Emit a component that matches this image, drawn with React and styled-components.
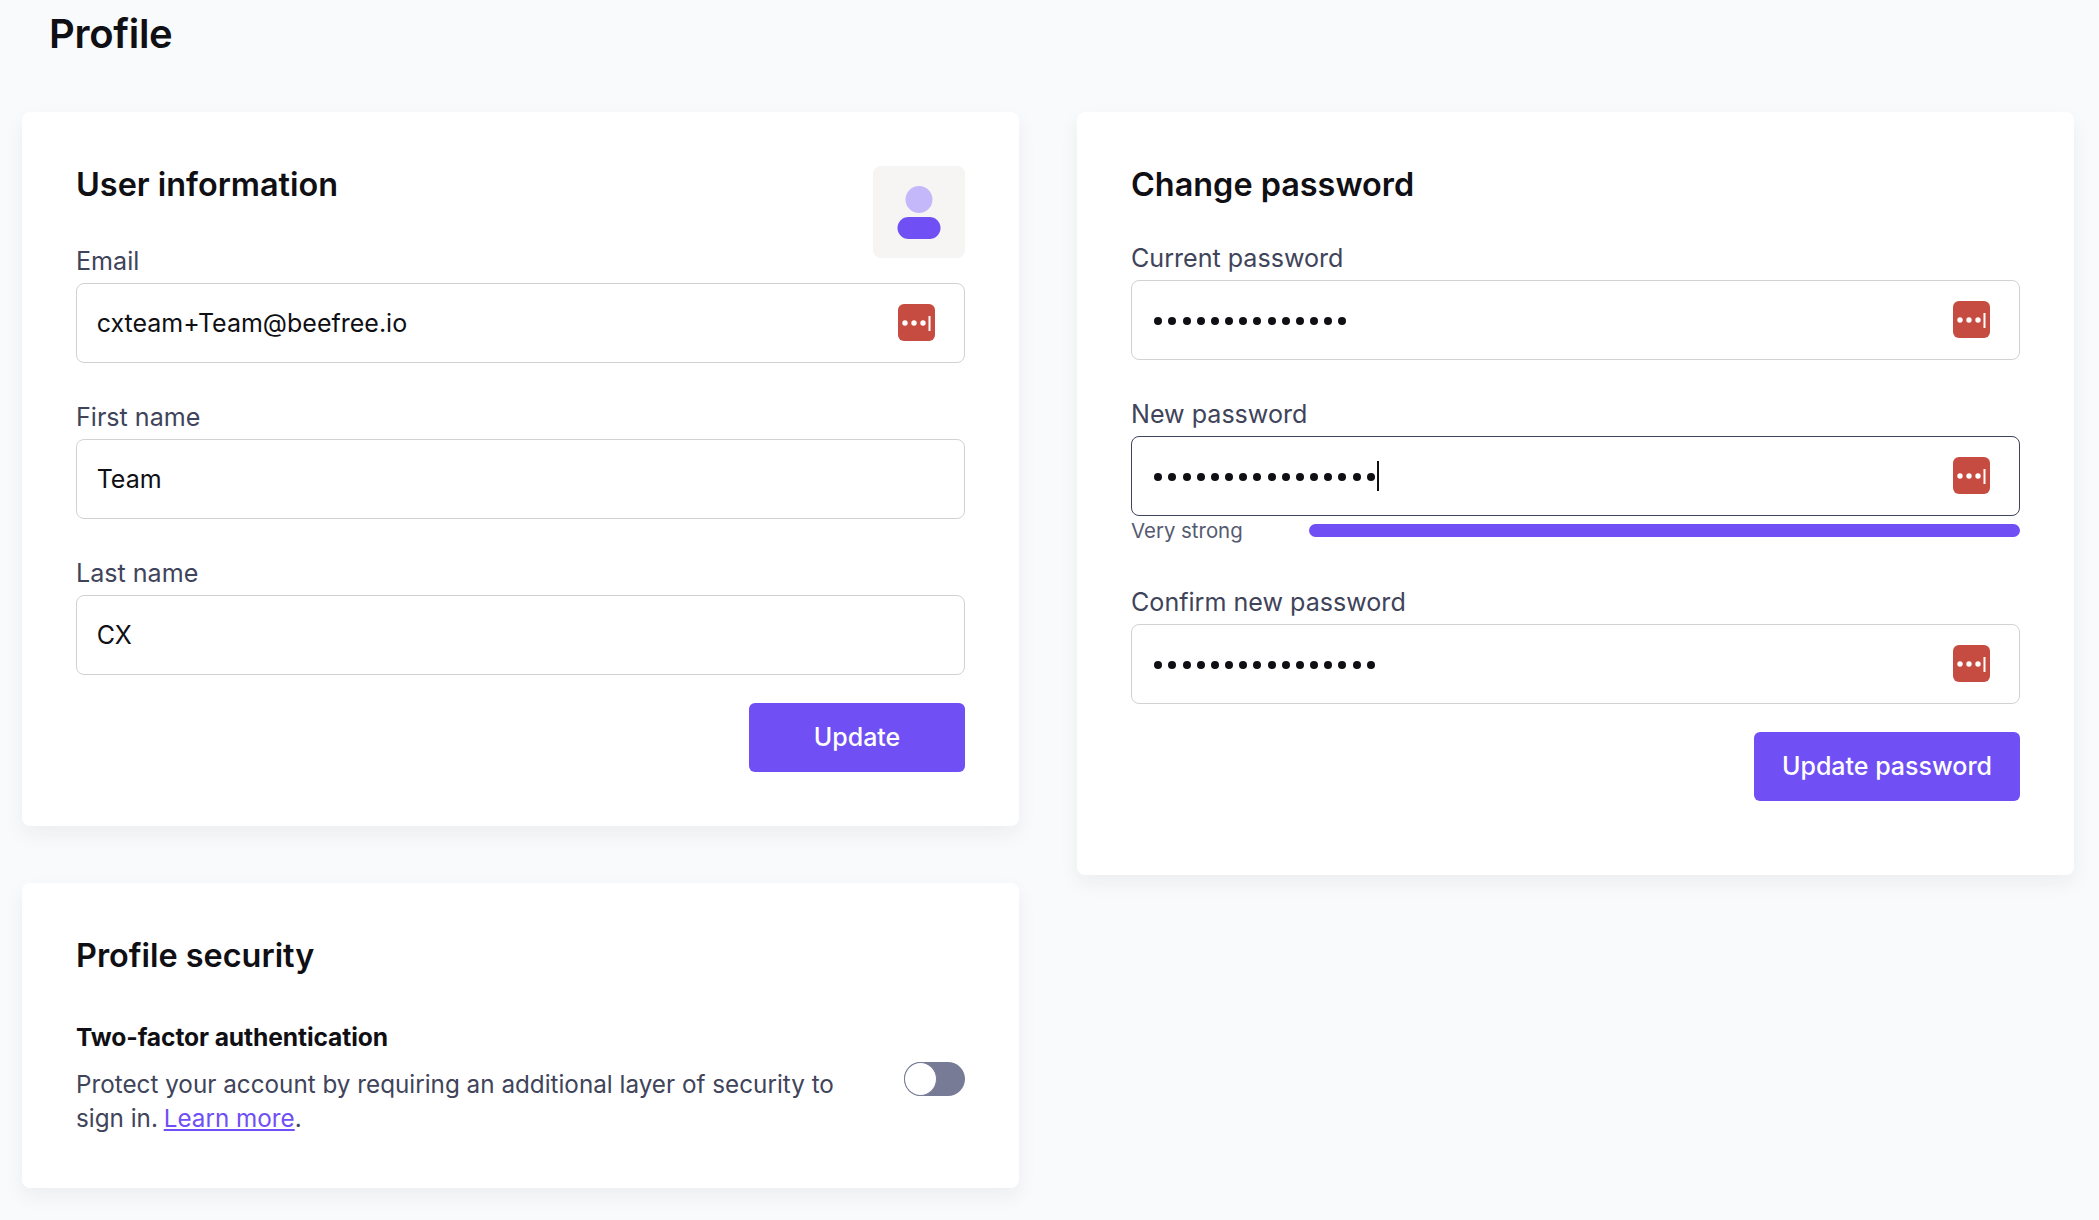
import React from "react";
import styled, { createGlobalStyle } from "styled-components";

const Global = createGlobalStyle`
  html, body { margin: 0; padding: 0; background: #f9fafb; }
  body { font-family: Inter, "Noto Sans", sans-serif; color: #0f0f14; }
  * { box-sizing: border-box; }
`;
const Page = styled.div`
  width: 2099px; height: 1220px; overflow: hidden;
  padding: 0 25px 0 22px;
`;
const PageTitle = styled.h1`
  margin: 0; padding: 8px 0 0 27px; height: 112px;
  font-size: 40px; line-height: 52px; font-weight: 600; letter-spacing: -0.3px;
`;
const Columns = styled.div`
  display: grid; grid-template-columns: 997px 997px; column-gap: 58px; align-items: start;
`;
const Column = styled.div`
  display: flex; flex-direction: column; gap: 57px;
`;
const Card = styled.section`
  background: #fff; border-radius: 8px;
  padding: 54px 54px ${p => p.$pb || 54}px;
  box-shadow: 0 8px 20px rgba(30, 35, 60, 0.06);
  min-height: ${p => p.$h}px;
`;
const CardHead = styled.div`
  display: flex; justify-content: space-between; align-items: flex-start;
  height: ${p => p.$h}px;
`;
const CardTitle = styled.h2`
  margin: 0; font-size: 32.4px; line-height: 38px; font-weight: 600; letter-spacing: 0;
`;
const Avatar = styled.div`
  width: 92px; height: 92px; border-radius: 8px; background: #f6f5f4;
  display: flex; align-items: center; justify-content: center; flex: none;
`;
const Field = styled.div`
  margin-top: ${p => p.$mt || 0}px;
`;
const Label = styled.label`
  display: block; font-size: 25.1px; line-height: 35px; color: #40445a; height: 39px;
`;
const InputBox = styled.div`
  height: 79.5px; border-radius: 8px; background: #fff;
  border: 1.5px solid ${p => p.$focus ? "#40445a" : "#d2d2d5"};
  padding: 0 29px 0 19.7px;
  display: flex; align-items: center; justify-content: space-between;
  font-size: 25px; color: #0f0f14;
`;
const Dots = styled.div`
  display: flex; align-items: center; gap: 6.18px; margin-left: 2.5px;
`;
const Dot = styled.span`
  width: 8px; height: 8px; margin-top: 2px; border-radius: 50%; background: #0f0f14; flex: none;
`;
const Caret = styled.span`
  width: 2px; height: 30px; background: #0f0f14; margin-left: -3.7px;
`;
const Strength = styled.div`
  display: grid; grid-template-columns: 178px 1fr; align-items: center; height: 32.5px;
`;
const StrengthLabel = styled.span`
  font-size: 20.4px; line-height: 24px; color: #555a70; margin-top: -1.5px;
`;
const Bar = styled.div`
  height: 13px; border-radius: 7px; background: #7050f5; margin-top: -2px;
`;
const Actions = styled.div`
  display: flex; justify-content: flex-end; margin-top: 28.5px;
`;
const Button = styled.button`
  height: 69px; width: ${p => p.$w}px; border: 0; border-radius: 6px; background: #7050f5; color: #fff;
  font: 500 25px Inter, sans-serif; padding: 0 0 2px;
`;
const Sub = styled.h3`
  margin: 0; font-size: 24.6px; line-height: 32px; font-weight: 700; letter-spacing: -0.1px;
  transform: translateY(-1px);
`;
const SecurityRow = styled.div`
  display: flex; justify-content: space-between; align-items: flex-start; margin-top: 14px;
`;
const Desc = styled.p`
  margin: 0; width: 800px; font-size: 24.25px; line-height: 34px; color: #40445a;
`;
const LearnMore = styled.a`
  color: #7050f5; text-decoration: underline; margin-left: -1px;
`;
const Toggle = styled.div`
  width: 61px; height: 34px; border-radius: 17px; background: #777b96; position: relative; flex: none;
  margin-top: -6px;
`;
const Knob = styled.span`
  position: absolute; left: 0; top: 0; width: 33px; height: 34px; border-radius: 50%;
  background: #fff; border: 1.5px solid #777b96;
`;
const KeySvg = styled.svg`
  margin-top: -1px; flex: none;
`;

const Person = () => (
  <svg width="44" height="53" viewBox="0 0 44 53">
    <circle cx="22" cy="13.5" r="13.5" fill="#c5b8fa" />
    <rect x="0.5" y="31" width="43" height="22" rx="11" fill="#7050f5" />
  </svg>
);
const KeyIcon = () => (
  <KeySvg width="37" height="37" viewBox="0 0 37 37">
    <rect width="37" height="37" rx="6" fill="#c64c41" />
    <circle cx="7" cy="19" r="2.7" fill="#fff" />
    <circle cx="16" cy="19" r="2.7" fill="#fff" />
    <circle cx="25" cy="19" r="2.7" fill="#fff" />
    <rect x="30.5" y="12" width="2" height="15" fill="#fff" />
  </KeySvg>
);
const Password = ({ n, caret }) => (
  <Dots>
    {Array.from({ length: n }, (_, i) => <Dot key={i} />)}
    {caret && <Caret />}
  </Dots>
);

export default function App() {
  return (
    <Page>
      <Global />
      <PageTitle>Profile</PageTitle>
      <Columns>
        <Column>
          <Card $h={714}>
            <CardHead $h={78}>
              <CardTitle>User information</CardTitle>
              <Avatar><Person /></Avatar>
            </CardHead>
            <Field>
              <Label>Email</Label>
              <InputBox>cxteam+Team@beefree.io<KeyIcon /></InputBox>
            </Field>
            <Field $mt={37.5}>
              <Label>First name</Label>
              <InputBox>Team</InputBox>
            </Field>
            <Field $mt={37.5}>
              <Label>Last name</Label>
              <InputBox>CX</InputBox>
            </Field>
            <Actions><Button $w={216}>Update</Button></Actions>
          </Card>
          <Card $h={305} $pb={52}>
            <CardTitle>Profile security</CardTitle>
            <Field $mt={47}>
              <Sub>Two-factor authentication</Sub>
              <SecurityRow>
                <Desc>Protect your account by requiring an additional layer of security to sign in. <LearnMore>Learn more</LearnMore>.</Desc>
                <Toggle><Knob /></Toggle>
              </SecurityRow>
            </Field>
          </Card>
        </Column>
        <Column>
          <Card $h={763}>
            <CardHead $h={75}>
              <CardTitle>Change password</CardTitle>
            </CardHead>
            <Field>
              <Label>Current password</Label>
              <InputBox><Password n={14} /><KeyIcon /></InputBox>
            </Field>
            <Field $mt={37.5}>
              <Label>New password</Label>
              <InputBox $focus><Password n={16} caret /><KeyIcon /></InputBox>
              <Strength><StrengthLabel>Very strong</StrengthLabel><Bar /></Strength>
            </Field>
            <Field $mt={37}>
              <Label>Confirm new password</Label>
              <InputBox><Password n={16} /><KeyIcon /></InputBox>
            </Field>
            <Actions><Button $w={266}>Update password</Button></Actions>
          </Card>
        </Column>
      </Columns>
    </Page>
  );
}
